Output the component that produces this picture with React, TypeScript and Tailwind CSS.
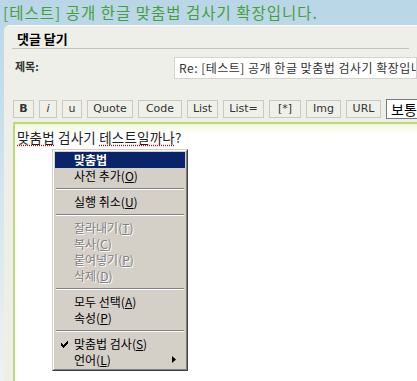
import { ReactNode } from 'react';

const ko = '[font-family:"Noto_Sans_CJK_KR","DejaVu_Sans",sans-serif]';

type Item =
  | { kind: 'sep' }
  | { kind: 'item'; label: ReactNode; active?: boolean; disabled?: boolean; check?: boolean; sub?: boolean };

const M = ({ c }: { c: string }) => <span className="underline underline-offset-1">{c}</span>;

const items: Item[] = [
  { kind: 'item', label: '맞춤법', active: true },
  { kind: 'item', label: <>사전 추가(<M c="O" />)</> },
  { kind: 'sep' },
  { kind: 'item', label: <>실행 취소(<M c="U" />)</> },
  { kind: 'sep' },
  { kind: 'item', label: <>잘라내기(<M c="T" />)</>, disabled: true },
  { kind: 'item', label: <>복사(<M c="C" />)</>, disabled: true },
  { kind: 'item', label: <>붙여넣기(<M c="P" />)</>, disabled: true },
  { kind: 'item', label: <>삭제(<M c="D" />)</>, disabled: true },
  { kind: 'sep' },
  { kind: 'item', label: <>모두 선택(<M c="A" />)</> },
  { kind: 'item', label: <>속성(<M c="P" />)</> },
  { kind: 'sep' },
  { kind: 'item', label: <>맞춤법 검사(<M c="S" />)</>, check: true },
  { kind: 'item', label: <>언어(<M c="L" />)</>, sub: true },
];

const buttons = [
  { label: 'B', w: 'w-[21px] font-bold' },
  { label: 'i', w: 'w-[18px] italic' },
  { label: 'u', w: 'w-[20px]' },
  { label: 'Quote', w: 'w-[46px]' },
  { label: 'Code', w: 'w-[44px]' },
  { label: 'List', w: 'w-[31px]' },
  { label: 'List=', w: 'w-[41px]' },
  { label: '[*]', w: 'w-[32px]' },
  { label: 'Img', w: 'w-[35px]' },
  { label: 'URL', w: 'w-[35px]' },
];

const ContextMenu = () => (
  <div className="absolute left-[37px] top-[25px] w-[136px] border border-t-[#d4d0c8] border-l-[#d4d0c8] border-r-[#404040] border-b-[#404040] bg-[#d4d0c8]">
    <div className="border border-t-white border-l-white border-r-[#808080] border-b-[#808080] p-px">
      {items.map((it, i) =>
        it.kind === 'sep' ? (
          <div key={i} className="h-[10px] flex items-center px-px">
            <div className="w-full border-t border-t-[#808080] border-b border-b-white" />
          </div>
        ) : (
          <div
            key={i}
            className={`relative h-[16px] flex items-center pl-[19px] text-[12px] leading-none ${ko} ${
              it.active
                ? 'bg-[#0a246a] text-white font-bold'
                : it.disabled
                  ? 'text-[#808080] [text-shadow:1px_1px_0_#fff]'
                  : 'text-black'
            }`}
          >
            {it.check && (
              <svg className="absolute left-[6px] top-[5px]" width="7" height="7" viewBox="0 0 7 7">
                <path d="M0 2h1v1h1v1h1V3h1V2h1V1h1V0h1v3H6v1H5v1H4v1H3v1H2V6H1V5H0z" fill="#000" />
              </svg>
            )}
            <span>{it.label}</span>
            {it.sub && (
              <svg className="absolute right-[9px] top-[4px]" width="4" height="7" viewBox="0 0 4 7">
                <path d="M0 0L4 3.5L0 7z" fill="#000" />
              </svg>
            )}
          </div>
        )
      )}
    </div>
  </div>
);

const App = () => {
  return (
    <div className="w-[417px] h-[381px] overflow-hidden flex flex-col bg-gradient-to-b from-[#b9d6e7] via-[#d3e5ee] to-[#eef2f2]">
      {/* page title */}
      <div className={`h-[25px] shrink-0 pl-[3px] pt-[1px] text-[15.5px] tracking-[1px] leading-[22px] text-[#45a03c] whitespace-nowrap ${ko}`}>
        [테스트] 공개 한글 맞춤법 검사기 확장입니다.
      </div>

      {/* reply panel */}
      <div className="flex-1 ml-[4px] rounded-tl-[6px] bg-[#efefea] border-t border-t-[#fafaf8] flex flex-col min-h-0">
        <div className="mx-[8px] h-[23px] border-b border-b-[#c4c4bc] flex items-end pb-[3px]">
          <span className={`pl-[5px] text-[13px] font-bold text-black leading-none ${ko}`}>댓글 달기</span>
        </div>

        <div className="flex items-start h-[31px] mt-[9px]">
          <span className={`w-[170px] pl-[11px] pt-[3px] text-[11px] font-bold text-[#333] leading-none ${ko}`}>제목:</span>
          <div className={`flex-1 h-[22px] -mt-[1px] bg-white border border-[#d4d4cc] pl-[4px] text-[12px] tracking-[0.5px] leading-[20px] text-[#333] whitespace-nowrap overflow-hidden ${ko}`}>
            Re: [테스트] 공개 한글 맞춤법 검사기 확장입니
          </div>
        </div>

        {/* toolbar */}
        <div className="flex items-center gap-[5px] pl-[9px] mt-[11px] h-[18px]">
          {buttons.map((b) => (
            <div
              key={b.label}
              className={`h-[18px] shrink-0 flex items-center justify-center border border-[#c9c9c0] bg-[#f0f0ea] text-[11px] text-[#333] [font-family:"DejaVu_Sans",sans-serif] ${b.w}`}
            >
              {b.label}
            </div>
          ))}
          <div className={`h-[20px] w-[40px] shrink-0 bg-white border border-[#7a7a7a] pl-[4px] text-[14px] leading-[18px] text-black whitespace-nowrap ${ko}`}>
            보통
          </div>
        </div>

        {/* text area */}
        <div className="relative flex-1 mt-[4px] ml-[9px] bg-white border-t-2 border-l-2 border-t-[#bcd97a] border-l-[#bcd97a]">
          <div className="h-[10px] bg-gradient-to-b from-[#f2f8dc] to-white" />
          <div className={`absolute left-[2px] top-[4px] text-[13.5px] tracking-[0.2px] leading-[18px] text-[#222] whitespace-nowrap ${ko}`}>
            <span className="underline decoration-dotted decoration-[#d00] underline-offset-2">맞춤법</span> 검사기{' '}
            <span className="underline decoration-dotted decoration-[#d00] underline-offset-2">테스트일까나</span>?
          </div>
          <ContextMenu />
        </div>
      </div>
    </div>
  );
};

export default App;
